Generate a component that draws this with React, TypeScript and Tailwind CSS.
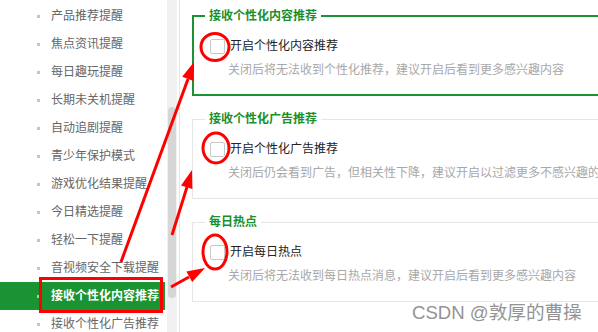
const menuItems = [
  '产品推荐提醒',
  '焦点资讯提醒',
  '每日趣玩提醒',
  '长期未关机提醒',
  '自动追剧提醒',
  '青少年保护模式',
  '游戏优化结果提醒',
  '今日精选提醒',
  '轻松一下提醒',
  '音视频安全下载提醒',
  '接收个性化内容推荐',
  '接收个性化广告推荐',
]

const activeIndex = 10

const sections = [
  {
    title: '接收个性化内容推荐',
    label: '开启个性化内容推荐',
    desc: '关闭后将无法收到个性化推荐，建议开启后看到更多感兴趣内容',
    active: true,
  },
  {
    title: '接收个性化广告推荐',
    label: '开启个性化广告推荐',
    desc: '关闭后仍会看到广告，但相关性下降，建议开启以过滤更多不感兴趣的广告',
    active: false,
  },
  {
    title: '每日热点',
    label: '开启每日热点',
    desc: '关闭后将无法收到每日热点消息，建议开启后看到更多感兴趣内容',
    active: false,
  },
]

const Arrow = ({ line, head }: { line: string; head: string }) => (
  <g>
    <polyline points={line} fill="none" stroke="#f00" strokeWidth="3" />
    <polygon points={head} fill="#f00" />
  </g>
)

export default function App() {
  return (
    <div className="relative w-[598px] h-[332px] overflow-hidden bg-white font-['Liberation_Sans','Noto_Sans_CJK_SC',sans-serif]">
      <div className="flex h-full">
        {/* side menu */}
        <ul className="w-[167px] shrink-0 pt-[2px]">
          {menuItems.map((item, i) => (
            <li
              key={item}
              className={`flex items-center w-[165px] h-[28px] text-[12px] ${
                i === activeIndex ? 'bg-[#1a9432] text-white font-bold' : 'text-[#666]'
              }`}
            >
              <span
                className={`ml-[37px] mr-[11px] w-[3px] h-[3px] ${
                  i === activeIndex ? 'bg-white/60' : 'bg-[#c4c4c4]'
                }`}
              />
              <span className="whitespace-nowrap">{item}</span>
            </li>
          ))}
        </ul>

        {/* scrollbar */}
        <div className="w-[10px] shrink-0 h-full bg-[#f1f1f1] pt-[107px]">
          <div className="mx-[1px] h-[191px] rounded-full bg-[#d6d6d6]" />
        </div>

        <div className="ml-[2px] flex-1 h-full border-l border-[#e4e4e4] pl-[12px] pt-[8px] flex flex-col gap-[15px]">
          {sections.map((s) => (
            <fieldset
              key={s.title}
              className={`shrink-0 w-[440px] h-[88px] pt-[14px] ${
                s.active ? 'border-2 border-[#1a9432] pl-[11px]' : 'border border-[#e6e6e6] pl-[12px]'
              }`}
            >
              <legend className="px-[4px] text-[12px] leading-[16px] font-bold text-[#1a8f2a]">
                {s.title}
              </legend>
              <label className="flex items-center h-[16px]">
                <span className="ml-[5px] w-[15px] h-[15px] border border-[#c8c8c8] rounded-[2px] bg-white" />
                <span className="ml-[5px] text-[12px] leading-[16px] text-[#222]">{s.label}</span>
              </label>
              <p className="mt-[8px] ml-[23px] text-[12px] leading-[16px] text-[#a8a8a8] whitespace-nowrap">
                {s.desc}
              </p>
            </fieldset>
          ))}
        </div>
      </div>

      {/* annotations */}
      <svg className="absolute inset-0 pointer-events-none" width="598" height="332" viewBox="0 0 598 332">
        <rect x="40.5" y="278.5" width="121" height="33" fill="none" stroke="#f00" strokeWidth="3" />
        <ellipse cx="215" cy="47" rx="14" ry="13.5" fill="none" stroke="#f00" strokeWidth="3" />
        <ellipse cx="216" cy="148" rx="13" ry="15" fill="none" stroke="#f00" strokeWidth="3" />
        <ellipse cx="215" cy="252" rx="12" ry="17" fill="none" stroke="#f00" strokeWidth="3" />
        <Arrow line="121,262 188,79" head="194,62 193.5,81 182.2,76.8" />
        <Arrow line="172,235 187,187" head="192,170 192.4,189 181,185.4" />
        <Arrow line="171,287 189,277" head="205,268 192.2,282 186.4,271.6" />
      </svg>

      <div className="absolute left-[412px] top-[302px] text-[18.6px] leading-[22px] text-[#939393] whitespace-nowrap">
        CSDN @敦厚的曹操
      </div>
    </div>
  )
}
